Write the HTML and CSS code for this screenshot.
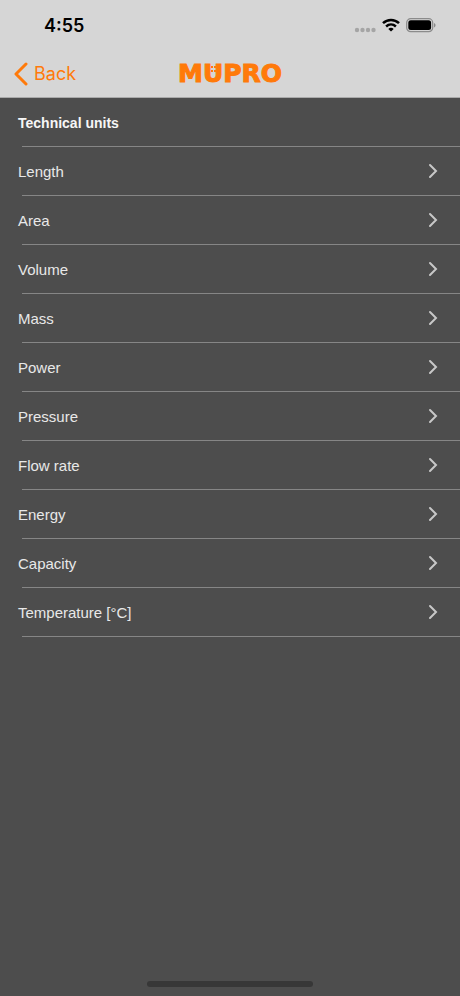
FILE: index.html
```html
<!DOCTYPE html>
<html lang="en">
<head>
<meta charset="utf-8">
<meta name="viewport" content="width=device-width, initial-scale=1">
<title>Technical units</title>
<link rel="stylesheet" href="styles.css">
</head>
<body>
<header class="top">
  <div class="status">
    <time class="clock">4:55</time>
    <div class="indicators">
      <svg class="signal" width="22" height="6" viewBox="0 0 22 6" fill="#a5a5a5" aria-hidden="true"><circle cx="3" cy="3" r="2.200"/><circle cx="8.500" cy="3" r="2.200"/><circle cx="14" cy="3" r="2.200"/><circle cx="19.500" cy="3" r="2.200"/></svg>
      <svg width="18" height="14" viewBox="0 0 18 14" fill="none" stroke="#000" stroke-width="2.500" aria-hidden="true"><path d="M1 5.200C5.500 .8 12.500 .8 17 5.200"/><path d="M4.100 8.500C7 5.800 11 5.800 13.900 8.500"/><path d="M9 13.500 6.300 10.900C7.700 9.500 10.300 9.500 11.700 10.900Z" fill="#000" stroke="none"/></svg>
      <svg width="30" height="15" viewBox="0 0 30 15" aria-hidden="true"><rect x=".7" y=".7" width="26" height="13" rx="4" fill="none" stroke="#8b8b8b" stroke-width="1.200"/><rect x="2.300" y="2.300" width="22.800" height="9.800" rx="2.500"/><path d="M28 5v4.500c2-.8 2-3.700 0-4.500Z" fill="#8b8b8b"/></svg>
    </div>
  </div>
  <nav class="bar">
    <button class="back" type="button"><svg width="14" height="24" viewBox="0 0 14 24" fill="none" stroke="currentColor" stroke-width="3" stroke-linecap="round" stroke-linejoin="round" aria-hidden="true"><path d="M12 2 2 12l10 10"/></svg>Back</button>
    <div class="logo" role="img" aria-label="MÜPRO">M<span class="umlaut">U</span>PRO</div>
  </nav>
</header>
<main class="content">
  <h1 class="title">Technical units</h1>
  <ul class="list">
    <li><a class="row" href="#length">Length<svg class="chevron" viewBox="0 0 10 16"><path d="m2 2 6 6-6 6"/></svg></a></li>
    <li><a class="row" href="#area">Area<svg class="chevron" viewBox="0 0 10 16"><path d="m2 2 6 6-6 6"/></svg></a></li>
    <li><a class="row" href="#volume">Volume<svg class="chevron" viewBox="0 0 10 16"><path d="m2 2 6 6-6 6"/></svg></a></li>
    <li><a class="row" href="#mass">Mass<svg class="chevron" viewBox="0 0 10 16"><path d="m2 2 6 6-6 6"/></svg></a></li>
    <li><a class="row" href="#power">Power<svg class="chevron" viewBox="0 0 10 16"><path d="m2 2 6 6-6 6"/></svg></a></li>
    <li><a class="row" href="#pressure">Pressure<svg class="chevron" viewBox="0 0 10 16"><path d="m2 2 6 6-6 6"/></svg></a></li>
    <li><a class="row" href="#flow-rate">Flow rate<svg class="chevron" viewBox="0 0 10 16"><path d="m2 2 6 6-6 6"/></svg></a></li>
    <li><a class="row" href="#energy">Energy<svg class="chevron" viewBox="0 0 10 16"><path d="m2 2 6 6-6 6"/></svg></a></li>
    <li><a class="row" href="#capacity">Capacity<svg class="chevron" viewBox="0 0 10 16"><path d="m2 2 6 6-6 6"/></svg></a></li>
    <li><a class="row" href="#temperature">Temperature [°C]<svg class="chevron" viewBox="0 0 10 16"><path d="m2 2 6 6-6 6"/></svg></a></li>
  </ul>
</main>
<footer class="home"><div class="home-bar"></div></footer>
</body>
</html>
```
FILE: styles.css
```css
* { box-sizing: border-box; }
body {
  margin: 0;
  min-height: 100vh;
  display: flex;
  flex-direction: column;
  background: #4d4d4d;
  color: #e8e8e8;
  font-family: "Liberation Sans", sans-serif;
}
.top {
  background: #d6d6d6;
  border-bottom: 1px solid #aaa;
  font-family: Inter, sans-serif;
}
.status {
  display: flex;
  justify-content: space-between;
  align-items: center;
  height: 50px;
  padding: 0 24px 0 44px;
  color: #000;
}
.clock { font-size: 18px; font-weight: 600; }
.indicators { display: flex; align-items: center; gap: 6px; }
.signal { align-self: flex-end; }
.bar {
  display: grid;
  grid-template-columns: 1fr auto 1fr;
  align-items: center;
  height: 47px;
  padding: 0 14px;
}
.back {
  display: flex;
  align-items: center;
  gap: 6px;
  justify-self: start;
  padding: 0;
  border: 0;
  background: none;
  color: #ff7a0a;
  font: inherit;
  font-size: 18px;
}
.logo {
  color: #ff7a0a;
  font-family: "DejaVu Sans", sans-serif;
  font-size: 25px;
  font-weight: 700;
  line-height: 30px;
  -webkit-text-stroke: 1px currentColor;
}
.umlaut { position: relative; }
/* The dots sit between the stems of the U. */
.umlaut::before {
  content: "";
  position: absolute;
  left: 8px;
  top: 7px;
  width: 2px;
  height: 2px;
  background: currentColor;
  box-shadow: 3px 0 currentColor, 0 4px currentColor, 3px 4px currentColor;
}
.content { flex: 1; }
.title, .row {
  display: flex;
  align-items: center;
  height: 49px;
  margin: 0;
  padding: 0 22px 0 18px;
  background: linear-gradient(#868686, #868686) 22px 100% / 100% 1px no-repeat;
}
.title { color: #f6f6f6; font-size: 14px; font-weight: 700; }
.list { margin: 0; padding: 0; list-style: none; }
.row {
  justify-content: space-between;
  padding-bottom: 1px;
  color: inherit;
  font-size: 15px;
  text-decoration: none;
}
.chevron {
  width: 10px;
  height: 16px;
  fill: none;
  stroke: #c8c8c8;
  stroke-width: 2;
  stroke-linecap: round;
}
.home { display: flex; justify-content: center; padding-bottom: 9px; }
.home-bar { width: 36%; height: 6px; border-radius: 3px; background: #373737; }
```
